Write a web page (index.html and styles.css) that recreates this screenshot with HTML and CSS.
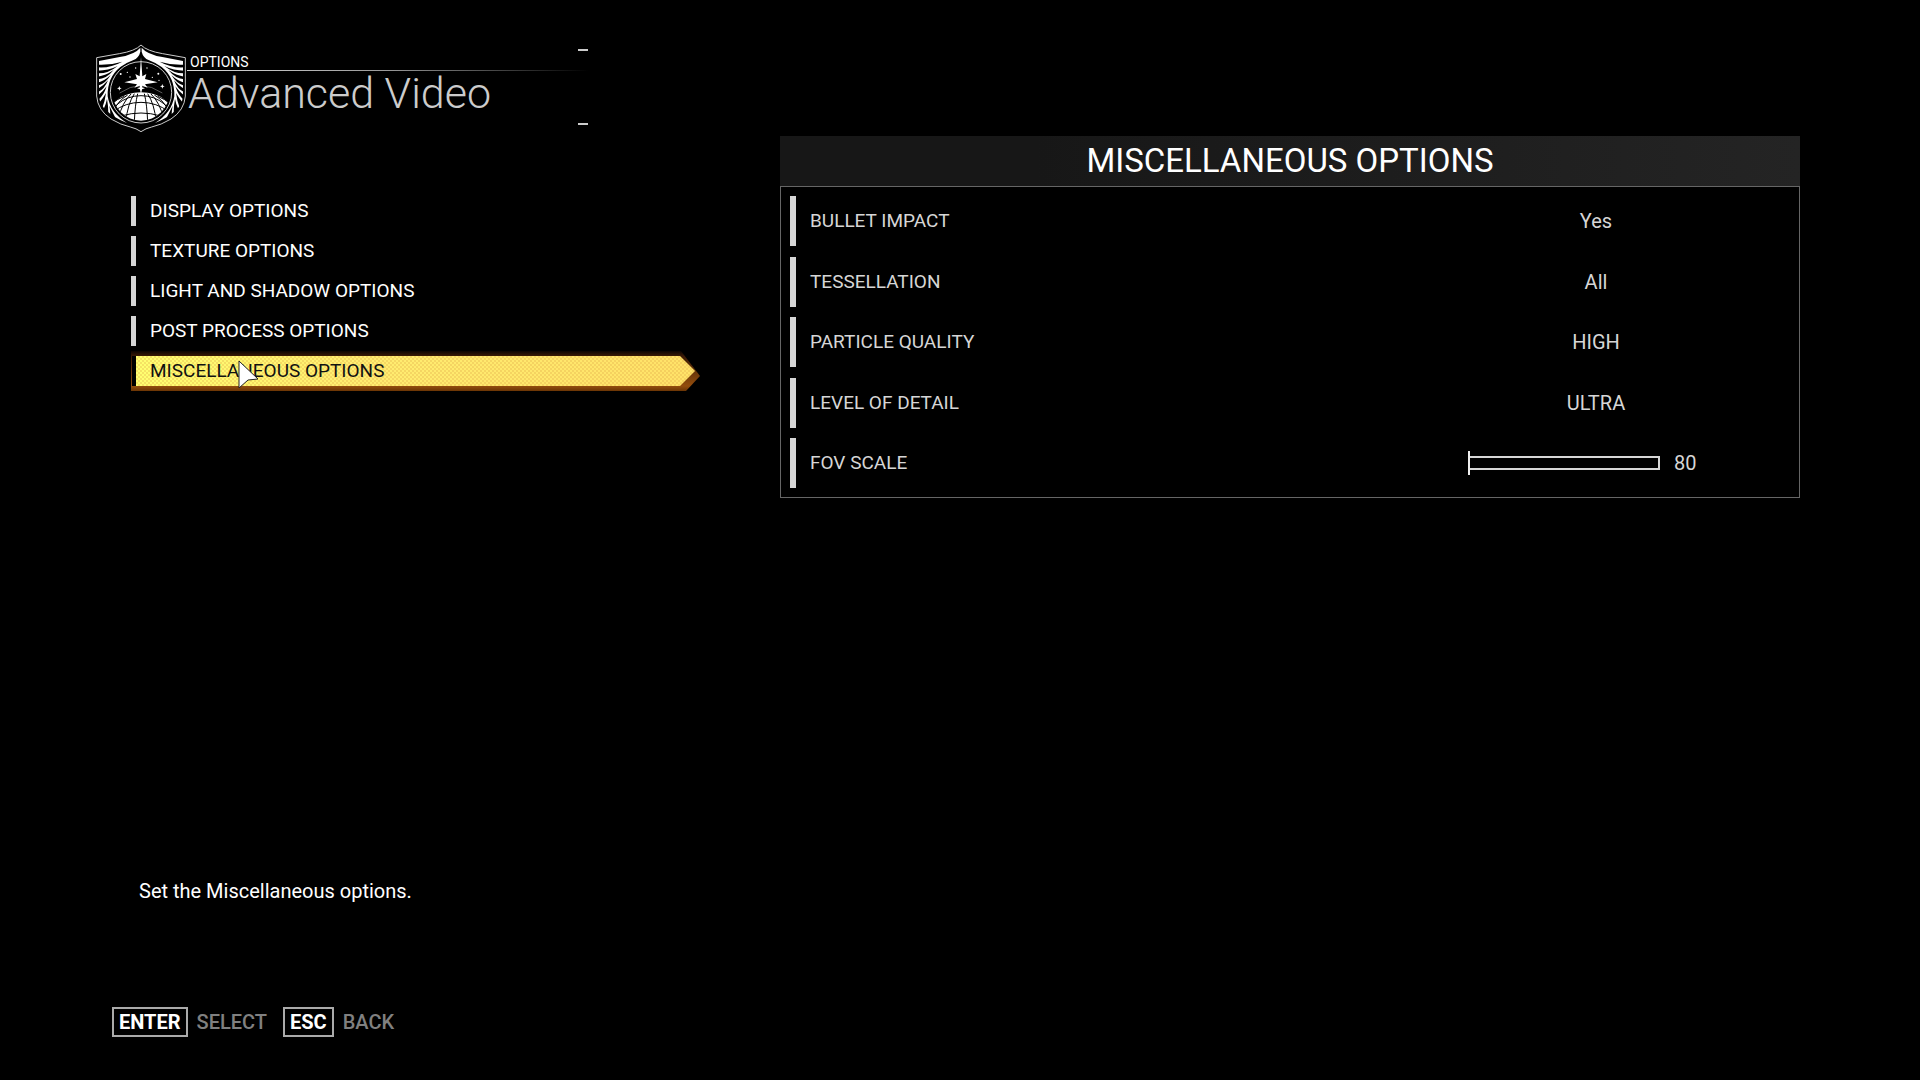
FILE: index.html
```html
<!DOCTYPE html>
<html lang="en">
<head>
    <meta charset="UTF-8">
    <meta name="viewport" content="width=device-width, initial-scale=1.0">
    <title>Options - Advanced Video</title>
    <link rel="stylesheet" href="styles.css">
</head>
<body>
    <div class="screen">
        <header class="header">
            <svg class="emblem" viewBox="30 27 276 264" aria-hidden="true">
                <defs>
                    <clipPath id="globe-clip">
                        <circle cx="168" cy="172" r="85"/>
                    </clipPath>
                    <g id="wing">
                        <path fill="#fff" d="M166 38 Q150 58 104 66 L42 78 V186 Q46 212 66 228 Q86 248 126 264 Q76 234 68 184 Q66 128 106 96 Q122 84 144 76 Q162 68 166 50 Z"/>
                        <g fill="#000">
                            <path d="M38 89 Q76 91 112 80 Q76 100 38 97 Z"/>
                            <path d="M38 107 Q70 107 98 93 Q70 116 38 115 Z"/>
                            <path d="M38 125 Q62 122 86 105 Q64 132 38 133 Z"/>
                            <path d="M38 143 Q58 138 77 120 Q60 148 38 152 Z"/>
                            <path d="M38 162 Q54 154 69 136 Q58 164 38 172 Z"/>
                            <path d="M38 182 Q54 170 65 154 Q56 182 40 194 Z"/>
                            <path d="M42 204 Q54 190 63 174 Q60 198 52 218 Z"/>
                            <path d="M56 222 Q63 208 66 192 Q70 212 70 236 Z"/>
                            <path d="M76 242 Q76 226 73 212 Q84 234 94 254 Z"/>
                        </g>
                    </g>
                </defs>
                <path class="shield" d="M168 30 Q151 48 103 56 L35 68 V183 Q38 226 78 252 Q108 270 136 276 Q154 280 168 290 Q182 280 200 276 Q228 270 258 252 Q298 226 301 183 V68 L233 56 Q185 48 168 30 Z"/>
                <use href="#wing"/>
                <use href="#wing" transform="translate(336 0) scale(-1 1)"/>
                <circle class="ring" cx="168" cy="172" r="92"/>
                <g clip-path="url(#globe-clip)">
                    <ellipse fill="#fff" cx="168" cy="252" rx="104" ry="80"/>
                    <g class="globe-lines">
                        <ellipse cx="168" cy="266" rx="98" ry="84"/>
                        <ellipse cx="168" cy="296" rx="116" ry="94"/>
                        <ellipse cx="168" cy="346" rx="150" ry="112"/>
                        <path d="M158 176 Q150 208 148 262"/>
                        <path d="M178 176 Q186 208 188 262"/>
                        <path d="M148 176 Q128 206 122 262"/>
                        <path d="M188 176 Q208 206 214 262"/>
                        <path d="M138 177 Q112 202 100 250"/>
                        <path d="M198 177 Q224 202 236 250"/>
                        <path d="M128 180 Q98 198 84 230"/>
                        <path d="M208 180 Q238 198 252 230"/>
                        <path d="M118 184 Q96 192 78 208"/>
                        <path d="M218 184 Q240 192 258 208"/>
                    </g>
                </g>
                <path class="orbit" d="M104 174 Q168 130 232 174"/>
                <path fill="#fff" d="M168 66 L172 124 L184 117 L180 132 L218 142 L180 148 L188 158 L172 152 L168 178 L164 152 L148 158 L156 148 L118 142 L156 132 L151 117 L164 124 Z"/>
                <path fill="#fff" d="M168 148 L171 157 L180 160 L171 163 L168 172 L165 163 L156 160 L165 157 Z"/>
                <g fill="#fff">
                    <path d="M103 153 L105 158 L110 160 L105 162 L103 167 L101 162 L96 160 L101 158 Z"/>
                    <path d="M232 147 L234 152 L239 154 L234 156 L232 161 L230 156 L225 154 L230 152 Z"/>
                    <circle cx="107" cy="117" r="3"/>
                    <circle cx="127" cy="112" r="2"/>
                    <circle cx="135" cy="126" r="2"/>
                    <circle cx="152" cy="99" r="2"/>
                    <circle cx="186" cy="99" r="2"/>
                    <circle cx="202" cy="127" r="2"/>
                    <circle cx="220" cy="116" r="3"/>
                    <circle cx="222" cy="136" r="2"/>
                </g>
            </svg>
            <div class="heading">
                <p class="breadcrumb">OPTIONS</p>
                <h1>Advanced Video</h1>
            </div>
        </header>

        <main class="content">
            <nav class="menu">
                <button type="button" class="menu-item">DISPLAY OPTIONS</button>
                <button type="button" class="menu-item">TEXTURE OPTIONS</button>
                <button type="button" class="menu-item">LIGHT AND SHADOW OPTIONS</button>
                <button type="button" class="menu-item">POST PROCESS OPTIONS</button>
                <button type="button" class="menu-item selected">
                    <span>MISCELLANEOUS OPTIONS</span>
                    <svg class="pointer" viewBox="0 0 22 30" aria-hidden="true">
                        <path d="M1 1 L20 19 L10 20 L1 28 Z"/>
                    </svg>
                </button>
            </nav>

            <section class="panel">
                <h2>MISCELLANEOUS OPTIONS</h2>
                <form class="settings">
                    <div class="setting">
                        <label for="bullet-impact">BULLET IMPACT</label>
                        <div class="control">
                            <select id="bullet-impact"><option>Yes</option><option>No</option></select>
                        </div>
                    </div>
                    <div class="setting">
                        <label for="tessellation">TESSELLATION</label>
                        <div class="control">
                            <select id="tessellation"><option>All</option><option>Off</option></select>
                        </div>
                    </div>
                    <div class="setting">
                        <label for="particle-quality">PARTICLE QUALITY</label>
                        <div class="control">
                            <select id="particle-quality"><option>HIGH</option><option>LOW</option></select>
                        </div>
                    </div>
                    <div class="setting">
                        <label for="level-of-detail">LEVEL OF DETAIL</label>
                        <div class="control">
                            <select id="level-of-detail"><option>ULTRA</option><option>HIGH</option></select>
                        </div>
                    </div>
                    <div class="setting">
                        <label for="fov-scale">FOV SCALE</label>
                        <div class="control">
                            <div class="slider">
                                <input type="range" id="fov-scale" min="80" max="120" value="80">
                                <output for="fov-scale">80</output>
                            </div>
                        </div>
                    </div>
                </form>
            </section>
        </main>

        <p class="description">Set the Miscellaneous options.</p>

        <footer class="footer">
            <button type="button" class="key-hint"><kbd>ENTER</kbd>SELECT</button>
            <button type="button" class="key-hint"><kbd>ESC</kbd>BACK</button>
        </footer>
    </div>
</body>
</html>
```

FILE: styles.css
```css
* {
    box-sizing: border-box;
    margin: 0;
}

body {
    background-color: #000;
    color: #fff;
    font-family: Roboto, "Liberation Sans", sans-serif;
    font-size: 20px;
    line-height: 24px;
}

button, select {
    font: inherit;
    color: inherit;
    background: none;
    border: none;
    padding: 0;
}

.screen {
    display: flex;
    flex-direction: column;
    min-height: 100vh;
    padding: 44px 120px 43px 95px;
}

/* title block */
.header {
    display: flex;
    height: 92px;
}

.emblem {
    width: 92px;
    height: 88px;
}

.shield, .ring, .orbit {
    fill: none;
    stroke: #ccc;
    stroke-width: 3;
}

.orbit {
    stroke: #888;
    stroke-width: 2;
}

.globe-lines {
    fill: none;
    stroke: #000;
    stroke-width: 3;
}

.heading {
    position: relative;
    width: 401px;
    padding-top: 8px;
}

.heading::before, .heading::after {
    content: "";
    position: absolute;
    right: 0;
    width: 10px;
    height: 2px;
    background-color: #ccc;
}

.heading::before {
    top: 5px;
}

.heading::after {
    top: 79px;
}

.breadcrumb {
    padding-top: 2px;
    padding-left: 3px;
    font-size: 14px;
    line-height: 16px;
    border-bottom: 1px solid;
    border-image: linear-gradient(to right, #ddd, #999 50%, transparent) 1;
}

h1 {
    padding-left: 1px;
    color: #ccc;
    font-size: 43px;
    font-weight: 300;
    line-height: 44px;
}

.content {
    display: grid;
    grid-template-columns: 569fr 1020fr;
    gap: 80px;
    align-items: start;
    flex: 1;
    padding-left: 36px;
}

/* left menu */
.menu {
    display: flex;
    flex-direction: column;
    gap: 10px;
    padding-top: 60px;
}

.menu-item {
    position: relative;
    height: 30px;
    padding-left: 14px;
    border-left: 5px solid #d6d6d6;
    font-size: 19px;
    text-align: left;
}

.menu-item.selected {
    color: #111;
    isolation: isolate;
}

.menu-item.selected::before, .menu-item.selected::after {
    content: "";
    position: absolute;
}

.menu-item.selected::before {
    z-index: -2;
    inset: -5px 0 -5px -5px;
    background:
        linear-gradient(#000, #000) 1px 5px / 4px 30px no-repeat,
        linear-gradient(#0c0502, #3a1a06 5px, #934d0d 35px, #6b3505);
    clip-path: polygon(0 0, calc(100% - 19px) 0, 100% 25px, calc(100% - 14px) 100%, 0 100%);
}

.menu-item.selected::after {
    z-index: -1;
    inset: 0 5px 0 0;
    background:
        repeating-conic-gradient(rgba(222, 164, 70, 0.3) 0 25%, transparent 0 50%) 0 0 / 4px 4px,
        linear-gradient(to right, #ffff70, #ffed70 40%, #ffe268);
    clip-path: polygon(0 0, calc(100% - 15px) 0, 100% 50%, calc(100% - 15px) 100%, 0 100%);
}

.pointer {
    position: absolute;
    top: 4px;
    left: 102px;
    width: 22px;
    height: 30px;
    fill: #fff;
    stroke: #222;
}

/* settings panel */
h2 {
    background: linear-gradient(to right, #171717 25%, #242424);
    font-size: 33px;
    font-weight: 400;
    line-height: 50px;
    text-align: center;
}

.settings {
    display: flex;
    flex-direction: column;
    justify-content: space-between;
    min-height: 312px;
    padding: 9px;
    border: 1px solid #666;
    color: #d6d6d6;
}

.setting {
    display: flex;
    align-items: center;
    height: 50px;
    padding-left: 14px;
    border-left: 6px solid #d6d6d6;
}

.setting label {
    flex: 1;
    font-size: 19px;
}

.control {
    display: flex;
    justify-content: center;
    width: 388px;
}

.control select {
    width: 256px;
    appearance: none;
    text-align: center;
}

.slider {
    display: flex;
    align-items: center;
    gap: 14px;
    width: 256px;
}

.slider input {
    width: 192px;
    height: 24px;
    appearance: none;
    background: linear-gradient(#d6d6d6, #d6d6d6) center / 100% 14px no-repeat;
}

.slider input::-webkit-slider-runnable-track {
    height: 24px;
    background: linear-gradient(#000, #000) center / calc(100% - 4px) 10px no-repeat;
}

.slider input::-webkit-slider-thumb {
    appearance: none;
    width: 2px;
    height: 24px;
    background-color: #eee;
}

.description {
    padding-left: 44px;
    margin-bottom: 104px;
}

/* key hints */
.footer {
    display: flex;
    gap: 16px;
    padding-left: 17px;
}

.key-hint {
    display: flex;
    align-items: center;
    gap: 9px;
    color: #808080;
    font-size: 20px;
    font-weight: 500;
}

.key-hint kbd {
    padding: 0 5px;
    border: 2px solid #aaa;
    color: #fff;
    font-family: inherit;
    font-weight: 700;
    line-height: 26px;
}
```
